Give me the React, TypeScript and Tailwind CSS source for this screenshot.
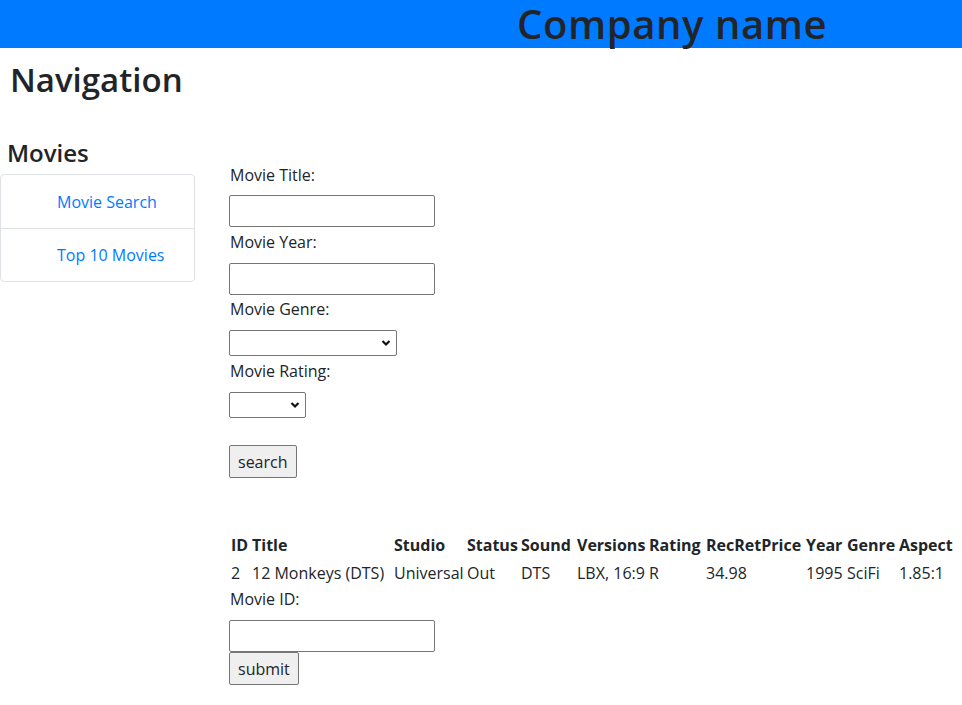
import React from 'react';

const columns = ['ID', 'Title', 'Studio', 'Status', 'Sound', 'Versions', 'Rating', 'RecRetPrice', 'Year', 'Genre', 'Aspect'];
const widths = ['w-[21px]', 'w-[142px]', 'w-[73px]', 'w-[54px]', 'w-[56px]', 'w-[72px]', 'w-[57px]', 'w-[100px]', 'w-[41px]', 'w-[52px]', 'w-[62px]'];
const movie = ['2', '12 Monkeys (DTS)', 'Universal', 'Out', 'DTS', 'LBX, 16:9', 'R', '34.98', '1995', 'SciFi', '1.85:1'];

function Chevron() {
  return (
    <svg className="pointer-events-none absolute right-[6px] top-1/2 -translate-y-1/2" width="10" height="7" viewBox="0 0 10 7">
      <path d="M1.5 1.5 L5 5 L8.5 1.5" fill="none" stroke="#111" strokeWidth="2.2" />
    </svg>
  );
}

function Select({ width }: { width: string }) {
  return (
    <div className={`relative h-[26px] ${width}`}>
      <select className="h-full w-full appearance-none rounded-[2px] border border-[#767676] bg-white" />
      <Chevron />
    </div>
  );
}

export default function App() {
  return (
    <div className="min-h-[705px] bg-white text-[#212529]" style={{ fontFamily: '"Open Sans", "Noto Sans", sans-serif' }}>
      <header className="h-[48px] bg-[#007bff] pl-[517px]">
        <h1 className="m-0 text-[40px] font-semibold leading-[48px] tracking-[0.6px] whitespace-nowrap">Company name</h1>
      </header>

      <h2 className="mt-[13px] pl-[10px] text-[33px] font-semibold leading-[38px]">Navigation</h2>

      <div className="mt-[39px] flex">
        <aside className="w-[195px] shrink-0">
          <h4 className="pl-[7px] text-[24px] font-semibold leading-[29px]">Movies</h4>
          <ul className="mt-[7px] rounded-[4px] border border-[#dee2e6]">
            <li className="flex h-[53px] items-center pl-[56px] text-[16px] text-[#007bff]">Movie Search</li>
            <li className="flex h-[53px] items-center border-t border-[#dee2e6] pl-[56px] text-[16px] text-[#007bff]">Top 10 Movies</li>
          </ul>
        </aside>

        <main className="pl-[34px] pt-[25px] text-[16px] leading-[24px]">
          <label className="block pl-[1px]">Movie Title:</label>
          <input className="mt-[8px] block h-[32px] w-[206px] rounded-[2px] border border-[#767676]" />
          <label className="mt-[3px] block pl-[1px]">Movie Year:</label>
          <input className="mt-[9px] block h-[32px] w-[206px] rounded-[2px] border border-[#767676]" />
          <label className="mt-[2px] block pl-[1px]">Movie Genre:</label>
          <div className="mt-[9px]"><Select width="w-[168px]" /></div>
          <label className="mt-[3px] block pl-[1px]">Movie Rating:</label>
          <div className="mt-[9px]"><Select width="w-[77px]" /></div>
          <button className="mt-[27px] block h-[33px] rounded-[2px] border border-[#767676] bg-[#efefef] px-[8px]">search</button>

          <table className="mt-[53px] ml-[1px] border-collapse">
            <thead>
              <tr className="h-[28px]">
                {columns.map((c, i) => (
                  <th key={c} className={`${widths[i]} p-0 pl-[1px] text-left font-bold whitespace-nowrap`}>{c}</th>
                ))}
              </tr>
            </thead>
            <tbody>
              <tr className="h-[28px]">
                {movie.map((v, i) => (
                  <td key={i} className="p-0 pl-[1px] whitespace-nowrap">{v}</td>
                ))}
              </tr>
            </tbody>
          </table>

          <label className="block pl-[1px]">Movie ID:</label>
          <input className="mt-[9px] block h-[32px] w-[206px] rounded-[2px] border border-[#767676]" />
          <button className="block h-[33px] rounded-[2px] border border-[#767676] bg-[#efefef] px-[8px]">submit</button>
        </main>
      </div>
    </div>
  );
}
